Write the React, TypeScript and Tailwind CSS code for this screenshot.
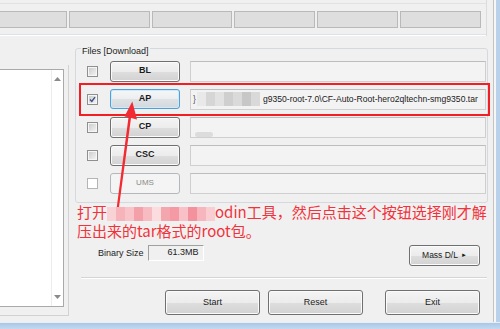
import React from "react";

const face =
  "border-[#707070] bg-[linear-gradient(to_bottom,#f4f4f4_0%,#ececec_50%,#dedede_51%,#d2d2d2_100%)] shadow-[inset_0_0_0_1px_#fbfbfb] text-[#1b1b1b]";

const Check = ({ checked, disabled }: { checked?: boolean; disabled?: boolean }) => {
  if (disabled) {
    return <div className="ml-[11px] h-[11px] w-[11px] shrink-0 border border-[#b4b4b4] bg-white" />;
  }
  return (
    <div className="ml-[11px] flex h-[11px] w-[11px] shrink-0 items-center justify-center border border-[#8e8f8f] bg-[#f6f6f6] p-[1px]">
      <div className="relative h-full w-full bg-[linear-gradient(135deg,#cdcdcd,#f2f2f2)]">
        {checked && (
          <svg viewBox="0 0 7 7" className="absolute inset-0 h-full w-full">
            <path d="M1 3.6 L2.8 5.4 L6 1.2" fill="none" stroke="#3c4f82" strokeWidth="1.4" />
          </svg>
        )}
      </div>
    </div>
  );
};

const Field = ({ children }: { children?: React.ReactNode }) => (
  <div className="ml-[10px] flex h-[21px] w-[296px] items-center overflow-hidden border border-[#cfcfcf] border-t-[#bdbdbd] bg-[#f3f3f3] pl-[2px] text-[8.6px] text-[#1b1b1b]">
    {children}
  </div>
);

const Row = ({
  label,
  checked,
  disabled,
  focus,
  children,
}: {
  label: string;
  checked?: boolean;
  disabled?: boolean;
  focus?: boolean;
  children?: React.ReactNode;
}) => (
  <div className="flex h-[22px] items-center">
    <Check checked={checked} disabled={disabled} />
    {disabled ? (
      <div className="ml-[12px] flex h-[21px] w-[70px] shrink-0 items-center justify-center rounded-[3px] border border-[#b4b8ba] bg-[#f4f4f4] text-[8px] text-[#8a8a8a]">
        {label}
      </div>
    ) : focus ? (
      <div className="ml-[12px] flex h-[20px] w-[70px] shrink-0 items-center justify-center rounded-[3px] border border-[#4f9fd8] bg-[linear-gradient(to_bottom,#f4f6f8_0%,#eceef0_50%,#dfe2e5_51%,#d4d8dc_100%)] shadow-[inset_0_0_0_1px_#cfeaf9] text-[9px] font-bold text-[#1b1b1b]">
        {label}
      </div>
    ) : (
      <div className={"ml-[12px] flex h-[21px] w-[70px] shrink-0 items-center justify-center rounded-[3px] border text-[9px] font-bold " + face}>
        {label}
      </div>
    )}
    <Field>{children}</Field>
  </div>
);

const Mosaic = ({ colors, h }: { colors: string[]; h: string }) => (
  <span className={"inline-flex shrink-0 align-middle " + h}>
    {colors.map((c, i) => (
      <span key={i} className="h-full w-[9px]" style={{ backgroundColor: c }} />
    ))}
  </span>
);

export default function App() {
  return (
    <div className="flex h-[329px] w-[500px] flex-col overflow-hidden bg-[#f0f0f0] font-['Liberation_Sans',Arial,sans-serif]">
      <div className="flex h-[322px]">
        <div className="relative flex w-[493px] flex-col">
          {/* top strip */}
          <div className="flex h-[36px] w-[487px] flex-col border-r border-[#dcdcdc]">
            <div className="h-[3px]" />
            <div className="h-px bg-[#e2e2e2]" />
            <div className="flex flex-1 gap-[2px] pt-[7px]">
              <div className="ml-[-14px] h-[17px] w-[81px] border border-[#b9b9b9] bg-[#dedede]" />
              <div className="h-[17px] w-[81px] border border-[#b9b9b9] bg-[#dedede]" />
              <div className="h-[17px] w-[80px] border border-[#b9b9b9] bg-[#dedede]" />
              <div className="h-[17px] w-[81px] border border-[#b9b9b9] bg-[#dedede]" />
              <div className="h-[17px] w-[81px] border border-[#b9b9b9] bg-[#dedede]" />
              <div className="h-[17px] w-[81px] border border-[#b9b9b9] bg-[#dedede]" />
            </div>
            <div className="h-px bg-[#dbe2ea]" />
            <div className="h-px bg-white" />
          </div>

          <div className="flex flex-1">
            {/* left log panel */}
            <div className="w-[69px] pt-[29px]">
              <div className="h-[251px] border-r border-b border-[#d2d2d2] pt-[4px]">
                <div className="relative h-[238px] w-[64px] border-t border-r border-b border-[#a9a9a9] bg-white">
                  <div className="absolute top-0 right-0 bottom-0 flex w-[12px] flex-col items-center justify-between border-l border-[#ececec] py-[7px]">
                    <svg width="7" height="4" viewBox="0 0 7 4">
                      <path d="M0 4 L3.5 0 L7 4 Z" fill="#8a8a8a" />
                    </svg>
                    <svg width="7" height="4" viewBox="0 0 7 4">
                      <path d="M0 0 L3.5 4 L7 0 Z" fill="#8a8a8a" />
                    </svg>
                  </div>
                </div>
              </div>
            </div>

            {/* right side */}
            <div className="ml-[6px] flex w-[413px] flex-col">
              <fieldset className="mt-[4px] rounded-[3px] border border-[#d5d9dd] pt-[3px] pb-[8px]">
                <legend className="ml-[5px] px-[1px] pt-[6px] text-[9px] leading-[11px] text-[#1b1b1b]">
                  Files [Download]
                </legend>
                <div className="flex flex-col gap-[6px]">
                  <Row label="BL" />
                  <Row label="AP" checked focus>
                    <span className="mr-[1px] text-[#555]">{"}"}</span>
                    <Mosaic
                      h="h-[14px]"
                      colors={["#e9e9e9", "#d6d6d6", "#e2e2e2", "#cfcfcf", "#dadada", "#c7c7c7", "#d9d9d9"]}
                    />
                    <span className="ml-[3px] whitespace-nowrap">g9350-root-7.0\CF-Auto-Root-hero2qltechn-smg9350.tar</span>
                  </Row>
                  <Row label="CP">
                    <span className="mt-[14px] ml-[2px] h-[5px] w-[18px] rounded-full bg-[#dcdcdc]" />
                  </Row>
                  <Row label="CSC" />
                  <Row label="UMS" disabled />
                </div>
              </fieldset>

              <div className="mt-[42px] flex h-[21px] items-start">
                <span className="mt-[3px] ml-[23px] text-[9px] leading-[11px] text-[#1b1b1b]">Binary Size</span>
                <div className="ml-[4px] flex h-[16px] w-[56px] items-center justify-end border border-[#a0a0a0] border-r-white border-b-white pr-[4px] text-[9px] text-[#1b1b1b]">
                  61.3MB
                </div>
                <div className={"ml-auto mr-[8px] flex h-[21px] w-[71px] items-center justify-center gap-[3px] rounded-[3px] border text-[8.5px] " + face}>
                  Mass D/L <span className="text-[6px]">►</span>
                </div>
              </div>

              <div className="mt-[11px] ml-[6px] h-[2px] w-[406px] border-t border-[#d5d5d5] border-b border-b-white" />

              <div className="mt-[11px] flex">
                <div className={"ml-[90px] flex h-[25px] w-[95px] items-center justify-center rounded-[3px] border text-[9px] " + face}>
                  Start
                </div>
                <div className={"ml-[8px] flex h-[25px] w-[95px] items-center justify-center rounded-[3px] border text-[9px] " + face}>
                  Reset
                </div>
                <div className={"ml-[22px] flex h-[25px] w-[95px] items-center justify-center rounded-[3px] border text-[9px] " + face}>
                  Exit
                </div>
              </div>
            </div>
          </div>

          {/* annotation overlays */}
          <div className="pointer-events-none absolute top-[83px] left-[79px] h-[33px] w-[411px] border-2 border-[#f31e24]" />
          <svg className="pointer-events-none absolute top-0 left-0" width="493" height="322" viewBox="0 0 493 322">
            <polygon
              points="116,213 118.2,213 131,118 137,119.5 132.3,101.5 124.5,116.5 128.5,117.3"
              fill="#f22b33"
            />
          </svg>
          <div className="pointer-events-none absolute top-[202px] left-[77px] font-['Noto_Sans_CJK_SC','Noto_Sans',sans-serif] text-[15px] leading-[19px] text-[#f2323b]">
            <div className="whitespace-nowrap">
              打开
              <Mosaic
                h="h-[14px]"
                colors={["#f9d2d6", "#f6b3ba", "#f8c4c9", "#f4a0a9", "#f7bcc2", "#fbdde0", "#f4a6ae", "#f59aa4", "#f8c1c7", "#f3929c", "#f7b6bd", "#f9cdd1"]}
              />
              odin工具，然后点击这个按钮选择刚才解
            </div>
            <div className="whitespace-nowrap">压出来的tar格式的root包。</div>
          </div>
        </div>
        <div className="w-px bg-[#c3c3c3]" />
        <div className="w-[2px] bg-[#f6f6f6]" />
        <div className="w-[4px] bg-[#b9d1ea]" />
      </div>
      <div className="h-px bg-[#e9eef4]" />
      <div className="flex-1 bg-[linear-gradient(to_bottom,#a9c7e8,#c4d9ef)]" />
    </div>
  );
}
